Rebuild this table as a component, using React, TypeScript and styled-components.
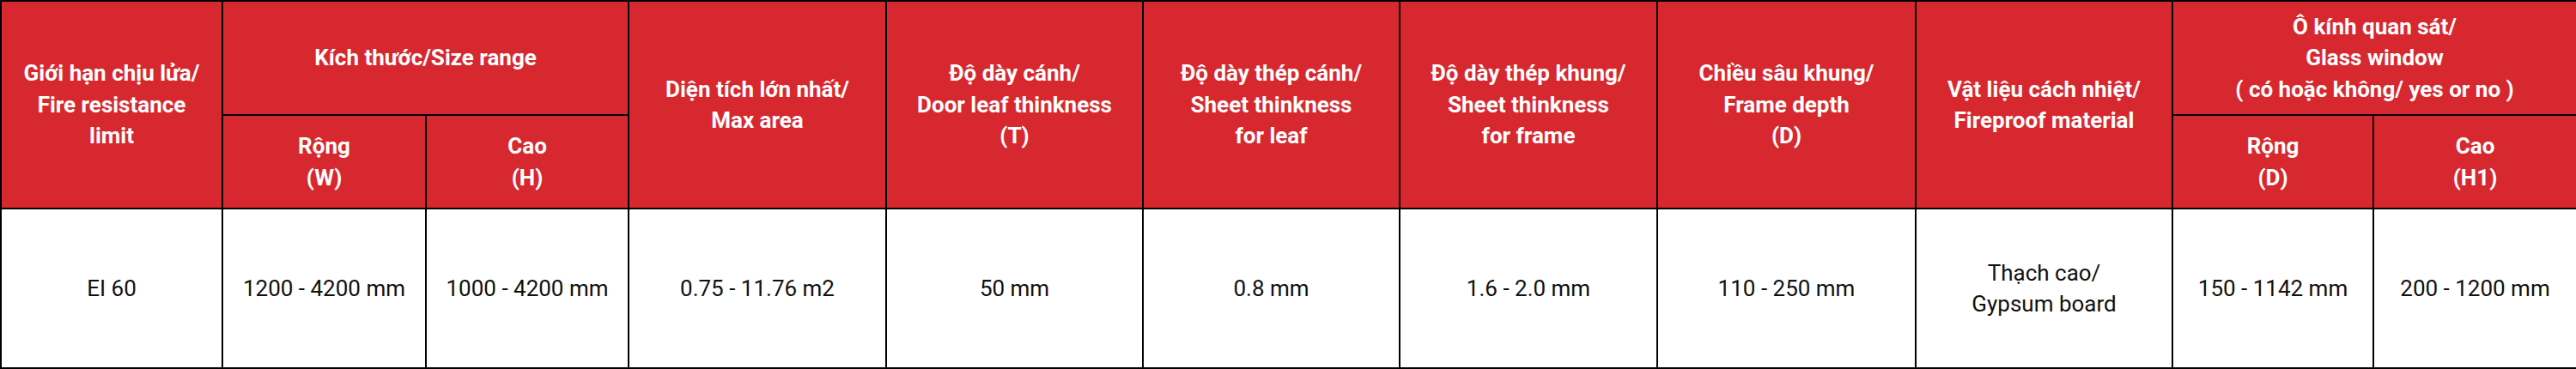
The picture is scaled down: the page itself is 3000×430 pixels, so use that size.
import React from "react";
import styled, { createGlobalStyle } from "styled-components";

const GlobalStyle = createGlobalStyle`
    html, body {
        margin: 0;
        padding: 0;
        background-color: #fff;
        font-family: Roboto, "Noto Sans", sans-serif;
    }
`;

const Table = styled.table`
    width: 3000px;
    border-collapse: collapse;
    table-layout: fixed;
    border: 2px solid #000;
`;

const HeadRow = styled.tr<{ height: number }>`
    height: ${props => props.height}px;
`;

const HeadCell = styled.th`
    background-color: #d7282f;
    color: #fff;
    font-size: 26px;
    font-weight: 700;
    line-height: 36.5px;
    text-align: center;
    vertical-align: middle;
    border: 2px solid #000;
    padding: 0 6px;
    white-space: nowrap;
`;

const BodyRow = styled.tr`
    height: 186px;
`;

const Cell = styled.td`
    color: #111;
    font-size: 26px;
    font-weight: 400;
    line-height: 36.5px;
    text-align: center;
    vertical-align: middle;
    border: 2px solid #000;
    padding: 0 6px;
    white-space: nowrap;
`;

const widths = [258, 237, 236, 300, 299, 299, 300, 301, 299, 234, 237];

const Lines = ({ text }: { text: string[] }) => (
    <>
        {text.map((line, i) => (
            <React.Fragment key={i}>
                {i > 0 && <br />}
                {line}
            </React.Fragment>
        ))}
    </>
);

const values: string[][] = [
    ["EI 60"],
    ["1200 - 4200 mm"],
    ["1000 - 4200 mm"],
    ["0.75 - 11.76 m2"],
    ["50 mm"],
    ["0.8 mm"],
    ["1.6 - 2.0 mm"],
    ["110 - 250 mm"],
    ["Thạch cao/", "Gypsum board"],
    ["150 - 1142 mm"],
    ["200 - 1200 mm"],
];

const App = () => {
    return (
        <>
            <GlobalStyle />
            <Table>
                <colgroup>
                    {widths.map((w, i) => (
                        <col key={i} style={{ width: w }} />
                    ))}
                </colgroup>
                <thead>
                    <HeadRow height={133}>
                        <HeadCell rowSpan={2}>
                            <Lines text={["Giới hạn chịu lửa/", "Fire resistance", "limit"]} />
                        </HeadCell>
                        <HeadCell colSpan={2}>Kích thước/Size range</HeadCell>
                        <HeadCell rowSpan={2}>
                            <Lines text={["Diện tích lớn nhất/", "Max area"]} />
                        </HeadCell>
                        <HeadCell rowSpan={2}>
                            <Lines text={["Độ dày cánh/", "Door leaf thinkness", "(T)"]} />
                        </HeadCell>
                        <HeadCell rowSpan={2}>
                            <Lines text={["Độ dày thép cánh/", "Sheet thinkness", "for leaf"]} />
                        </HeadCell>
                        <HeadCell rowSpan={2}>
                            <Lines text={["Độ dày thép khung/", "Sheet thinkness", "for frame"]} />
                        </HeadCell>
                        <HeadCell rowSpan={2}>
                            <Lines text={["Chiều sâu khung/", "Frame depth", "(D)"]} />
                        </HeadCell>
                        <HeadCell rowSpan={2}>
                            <Lines text={["Vật liệu cách nhiệt/", "Fireproof material"]} />
                        </HeadCell>
                        <HeadCell colSpan={2}>
                            <Lines
                                text={["Ô kính quan sát/", "Glass window", "( có hoặc không/ yes or no )"]}
                            />
                        </HeadCell>
                    </HeadRow>
                    <HeadRow height={109}>
                        <HeadCell>
                            <Lines text={["Rộng", "(W)"]} />
                        </HeadCell>
                        <HeadCell>
                            <Lines text={["Cao", "(H)"]} />
                        </HeadCell>
                        <HeadCell>
                            <Lines text={["Rộng", "(D)"]} />
                        </HeadCell>
                        <HeadCell>
                            <Lines text={["Cao", "(H1)"]} />
                        </HeadCell>
                    </HeadRow>
                </thead>
                <tbody>
                    <BodyRow>
                        {values.map((v, i) => (
                            <Cell key={i}>
                                <Lines text={v} />
                            </Cell>
                        ))}
                    </BodyRow>
                </tbody>
            </Table>
        </>
    );
};

export default App;
